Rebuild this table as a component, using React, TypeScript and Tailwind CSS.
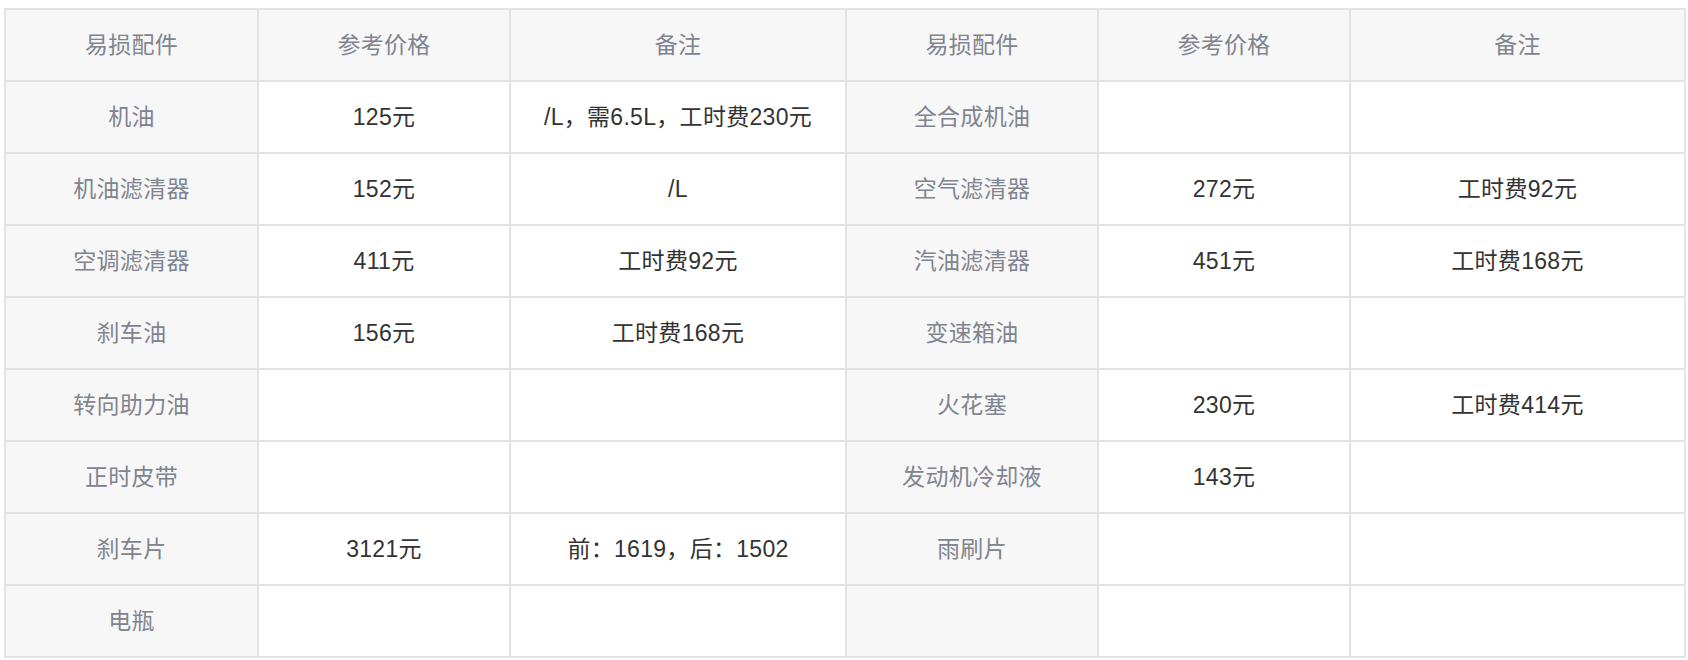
import React from 'react';

const rows: string[][] = [
  ['机油', '125元', '/L，需6.5L，工时费230元', '全合成机油', '', ''],
  ['机油滤清器', '152元', '/L', '空气滤清器', '272元', '工时费92元'],
  ['空调滤清器', '411元', '工时费92元', '汽油滤清器', '451元', '工时费168元'],
  ['刹车油', '156元', '工时费168元', '变速箱油', '', ''],
  ['转向助力油', '', '', '火花塞', '230元', '工时费414元'],
  ['正时皮带', '', '', '发动机冷却液', '143元', ''],
  ['刹车片', '3121元', '前：1619，后：1502', '雨刷片', '', ''],
  ['电瓶', '', '', '', '', ''],
];

const headers = ['易损配件', '参考价格', '备注', '易损配件', '参考价格', '备注'];
const widths = [253, 252, 336, 252, 252, 335];

export default function App() {
  return (
    <div
      className="bg-white w-[1688px] h-[660px] pt-[8px] pl-[4px]"
      style={{ fontFamily: '"Liberation Sans", "Noto Sans CJK SC", sans-serif' }}
    >
      <table className="border-collapse table-fixed w-[1680px] text-[23px] tracking-[0.3px]">
        <colgroup>
          {widths.map((w, i) => (
            <col key={i} style={{ width: w }} />
          ))}
        </colgroup>
        <thead>
          <tr className="h-[72px]">
            {headers.map((h, i) => (
              <th
                key={i}
                className="border-2 border-[#e3e3e3] bg-[#f7f7f7] text-[#80848f] font-normal text-center align-middle"
              >
                {h}
              </th>
            ))}
          </tr>
        </thead>
        <tbody>
          {rows.map((r, ri) => (
            <tr key={ri} className="h-[72px]">
              {r.map((c, ci) => {
                const label = ci === 0 || ci === 3;
                return (
                  <td
                    key={ci}
                    className={`border-2 border-[#e3e3e3] text-center align-middle ${
                      label ? 'bg-[#f7f7f7] text-[#80848f]' : 'bg-white text-[#333333]'
                    }`}
                  >
                    {c}
                  </td>
                );
              })}
            </tr>
          ))}
        </tbody>
      </table>
    </div>
  );
}
